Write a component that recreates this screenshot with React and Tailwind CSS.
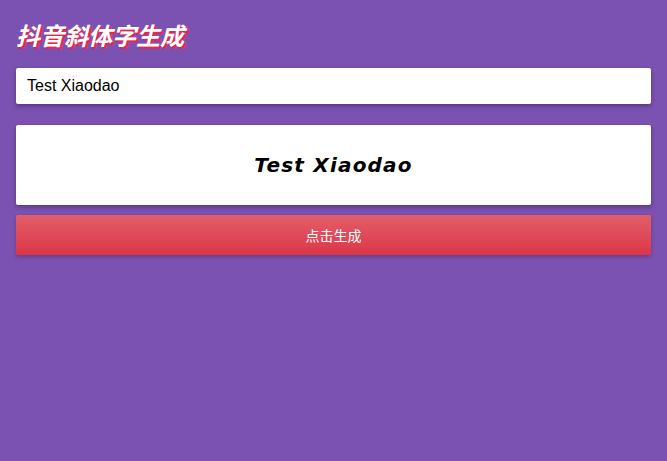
export default function App() {
  return (
    <div className="min-h-[461px] w-full bg-[#7b51b1] px-4 pt-[18px] font-['Liberation_Sans','Noto_Sans_CJK_SC',sans-serif]">
      <h1 className="font-['Noto_Sans_CJK_SC',sans-serif] text-[24px] leading-[34px] font-bold italic text-white [text-shadow:2px_2px_0_#e8254b]">
        抖音斜体字生成
      </h1>
      <input
        className="mt-[16px] block h-9 w-full rounded-[2px] bg-white px-[11px] text-[16px] text-black shadow-[0_2px_4px_rgba(0,0,0,0.3)] outline-none"
        defaultValue="Test Xiaodao"
      />
      <div className="mt-[21px] flex h-20 w-full items-center justify-center rounded-[2px] bg-white shadow-[0_2px_4px_rgba(0,0,0,0.3)]">
        <span className="font-['DejaVu_Sans',sans-serif] text-[20px] font-bold italic tracking-[1.2px] text-black">
          Test Xiaodao
        </span>
      </div>
      <button className="mt-[10px] flex h-10 w-full items-center justify-center rounded-[2px] bg-gradient-to-b from-[#e35d6a] to-[#db3547] font-['Noto_Sans_CJK_SC',sans-serif] text-[14px] text-white shadow-[0_2px_4px_rgba(0,0,0,0.2)]">
        点击生成
      </button>
    </div>
  );
}
